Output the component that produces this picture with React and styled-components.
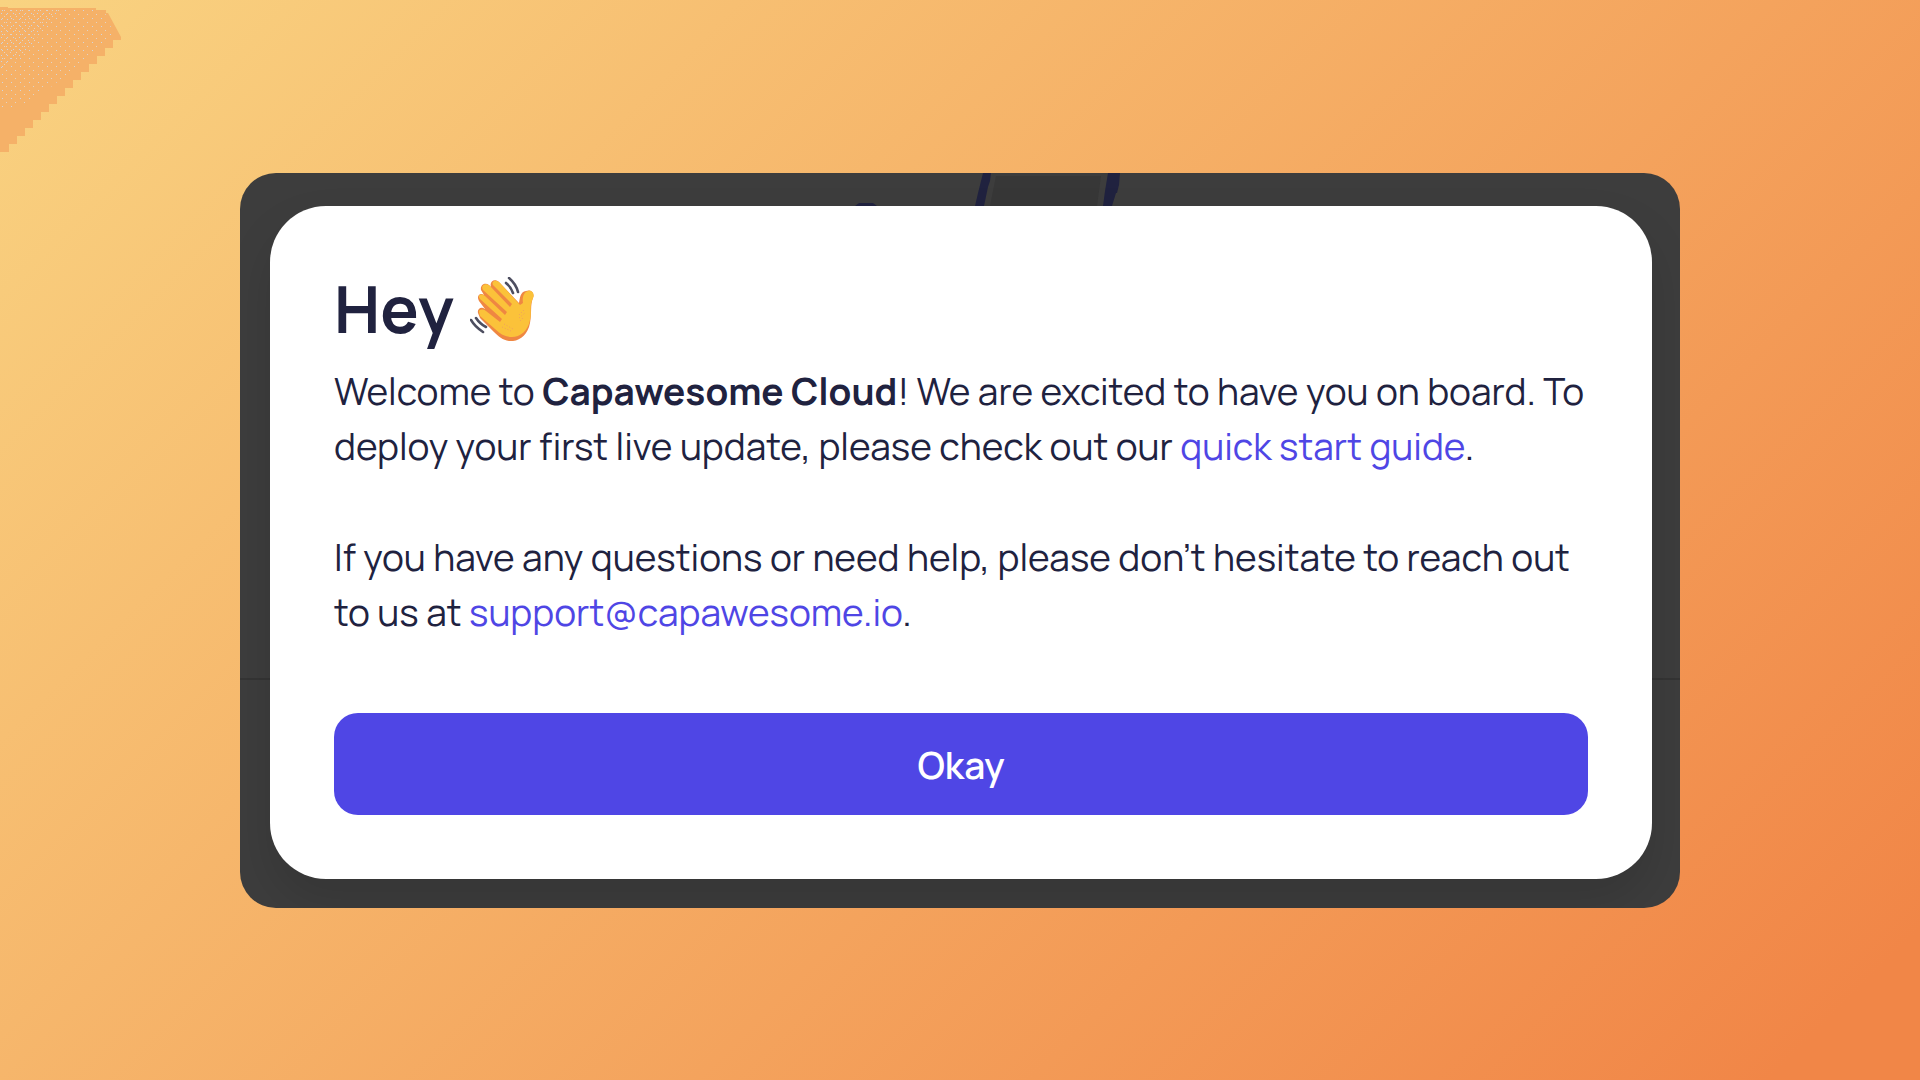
import React, { useState } from "react";
import styled, { createGlobalStyle } from "styled-components";

const App = () => {
  const [isOpen, setIsOpen] = useState(true);

  return (
    <>
      <GlobalStyle />
      <Page>
        <CornerShape />
        <Backdrop>
          <BackdropArt />
          {isOpen && (
            <Dialog role="dialog" aria-labelledby="welcome-title">
              <Title id="welcome-title">
                Hey
                <WavingHand />
              </Title>
              <Paragraph>
                Welcome to <strong>Capawesome Cloud</strong>! We are excited to
                have you on board. To deploy your first live update, please
                check out our <TextLink href="#guide">quick start guide</TextLink>.
              </Paragraph>
              <Paragraph>
                If you have any questions or need help, please don’t hesitate to
                reach out to us at{" "}
                <TextLink href="mailto:support@capawesome.io">
                  support@capawesome.io
                </TextLink>
                .
              </Paragraph>
              <OkayButton type="button" onClick={() => setIsOpen(false)}>
                Okay
              </OkayButton>
            </Dialog>
          )}
        </Backdrop>
      </Page>
    </>
  );
};

export default App;

const CornerShape = () => (
  <Corner viewBox="0 0 122 152" aria-hidden="true">
    <defs>
      <pattern id="dots" width="9" height="8" patternUnits="userSpaceOnUse">
        <rect x="2" y="2" width="1" height="1" fill="#d5d5d8" />
        <rect x="6" y="6" width="1" height="1" fill="#e3d3c4" />
      </pattern>
      <pattern id="denseDots" width="6" height="6" patternUnits="userSpaceOnUse">
        <rect x="1" y="1" width="1" height="1" fill="#c9d3e4" />
        <rect x="4" y="4" width="1" height="1" fill="#e3d3c4" />
      </pattern>
    </defs>
    <path
      fill="#f5b168"
      d="M0 7H8V8H96V10H106V13H108L121 37V40H113V48H105V56H97V64H89V72H81V80H73V88H65V96H57V104H49V112H41V120H33V128H25V136H17V144H9V152H0Z"
    />
    <path fill="url(#dots)" d="M0 8H96L108 16L113 36L97 50L60 80L28 104L0 110Z" />
    <path fill="url(#denseDots)" d="M0 8H64L44 26L30 50L0 70Z" />
  </Corner>
);

const BackdropArt = () => (
  <Art viewBox="0 0 320 33" aria-hidden="true">
    <path fill="#373737" d="M195 3H300L296 33H189Z" />
    <path
      fill="#20223f"
      d="M182 0H190L189 8L187 14L183 33H174L177 20L180 8ZM307 0H319L318 12L316 20H315L311 33H302L304 18ZM54 33L58 30H72L76 33Z"
    />
  </Art>
);

const WavingHand = () => (
  <Hand viewBox="0 0 64 64" role="img" aria-label="waving hand">
    <path
      fill="#ef8742"
      d="M8 36C7 32 11 29 15 32L9 24C6 19 10 15 14 18L11 13C10 8 15 5 19 8L21 10C19 4 25 1 29 5L49 26C50 21 50 15 56 14C61 12 65 16 63 21C60 28 62 36 60 46C58 57 51 63 43 64C35 65 29 60 24 55L10 41Z"
    />
    <path
      fill="#fbc23a"
      d="M9 35C9 32 13 32 16 34L30 45L32 42L10 22C7 18 11 16 15 19L35 38L37 35L13 13C10 8 16 5 20 9L40 30L42 27L23 8C21 4 26 2 30 6L50 28L53 26C52 20 54 15 58 14C62 13 65 17 63 21C59 29 62 35 60 43C58 54 50 60 42 60C35 60 30 57 25 52L10 39Z"
    />
    <path
      fill="none"
      stroke="#ef9f61"
      strokeDasharray="1 2"
      d="M32 50L41 54M34 47L43 52M49 38L54 33M49 41L55 36M50 44L54 40"
    />
    <path
      fill="none"
      stroke="#4d4e60"
      strokeWidth="2.6"
      strokeLinecap="round"
      d="M39 1Q46 7 48 15M36 6Q41 10 43 16M1 43Q5 50 13 55M6 41Q10 47 16 50"
    />
  </Hand>
);

const GlobalStyle = createGlobalStyle`
  * {
    box-sizing: border-box;
  }

  body {
    margin: 0;
    font-family: Manrope, Inter, "Liberation Sans", sans-serif;
    color: #20223f;
  }
`;

const Page = styled.main`
  position: relative;
  display: flex;
  justify-content: center;
  align-items: center;
  min-height: 100vh;
  background: linear-gradient(135deg, #f9d381 0%, #f18647 95%);
`;

const Corner = styled.svg`
  position: absolute;
  top: 0;
  left: 0;
  width: 122px;
  height: 152px;
  overflow: visible;
`;

const Backdrop = styled.section`
  display: flex;
  flex-direction: column;
  width: 75%;
  padding: 0 28px 29px 30px;
  border-radius: 36px;
  overflow: hidden;
  background:
    linear-gradient(#343434, #343434) 0 69% / 100% 2px no-repeat,
    #3d3d3d;
`;

const Art = styled.svg`
  display: block;
  align-self: center;
  width: 320px;
  height: 33px;
`;

const Dialog = styled.div`
  display: flex;
  flex-direction: column;
  padding: 64px;
  border-radius: 56px;
  background-color: #fff;
  box-shadow: 0 24px 48px rgba(0, 0, 0, 0.12);
`;

const Title = styled.h1`
  display: flex;
  align-items: center;
  gap: 16px;
  margin: 0 0 16px;
  font-size: 64px;
  font-weight: 700;
  line-height: 78px;
`;

const Hand = styled.svg`
  width: 64px;
  height: 64px;
`;

const Paragraph = styled.p`
  margin: 0;
  font-size: 37px;
  font-weight: 400;
  line-height: 55px;

  & + & {
    margin-top: 56px;
  }

  strong {
    font-weight: 700;
  }
`;

const TextLink = styled.a`
  color: #4f46e5;
  text-decoration: none;

  &:hover {
    text-decoration: underline;
  }
`;

const OkayButton = styled.button`
  margin-top: 73px;
  padding: 25px 24px 23px;
  border: none;
  border-radius: 24px;
  background-color: #4f46e5;
  color: #fff;
  font-family: inherit;
  font-size: 37px;
  font-weight: 600;
  line-height: 54px;
  cursor: pointer;

  &:hover {
    background-color: #4338ca;
  }
`;
